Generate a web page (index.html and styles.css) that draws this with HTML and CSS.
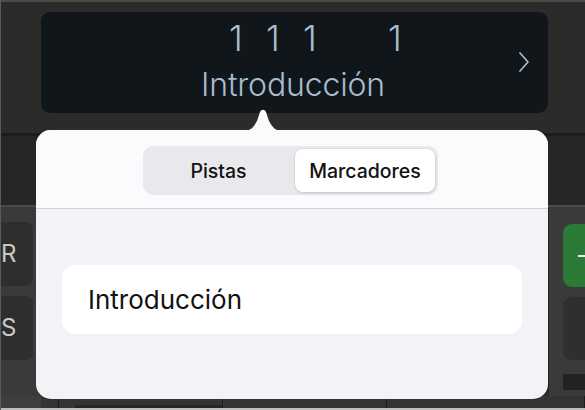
FILE: index.html
```html
<!DOCTYPE html>
<html lang="es">
<head>
<meta charset="utf-8">
<title>Marcadores</title>
<link rel="stylesheet" href="styles.css">
</head>
<body>
<div class="screen">
  <header class="topbar">
    <div class="display">
      <div class="position">
        <span class="num">1</span><span class="num">1</span><span class="num">1</span><span class="num beat">1</span>
      </div>
      <div class="marker-name">Introducción</div>
      <svg class="chevron" width="14" height="24" viewBox="0 0 14 24"><path d="M3 3 L11 12 L3 21" fill="none" stroke="currentColor" stroke-width="1.7" stroke-linecap="round" stroke-linejoin="round"/></svg>
    </div>
  </header>
  <div class="ruler"></div>
  <main class="tracks">
    <div class="left-col">
      <div class="key">R</div>
      <div class="key">S</div>
    </div>
    <div class="middle"></div>
    <div class="right-col">
      <div class="btn green"><span class="dash"></span></div>
      <div class="btn dark"></div>
      <div class="btn block"></div>
    </div>
  </main>
  <div class="timeline">
    <div class="cell c1"></div>
    <div class="cell c2"></div>
    <div class="cell c3"><span class="bar"></span></div>
    <div class="cell c4"></div>
    <div class="cell c5"></div>
  </div>

  <div class="popover">
    <svg class="arrow" width="44" height="22" viewBox="0 0 44 22"><path d="M0 22 C10 22 12 19 16 12 L19 3 C20.5 0 23.5 0 25 3 L28 12 C32 19 34 22 44 22 Z" fill="#fbfbfd"/></svg>
    <div class="pop-body">
      <div class="pop-head">
        <div class="segmented">
          <div class="seg">Pistas</div>
          <div class="seg selected">Marcadores</div>
        </div>
      </div>
      <div class="pop-list">
        <div class="row">Introducción</div>
      </div>
    </div>
  </div>
</div>
</body>
</html>
```

FILE: styles.css
```css
html, body {
  margin: 0;
  padding: 0;
}
body {
  width: 585px;
  height: 410px;
  overflow: hidden;
  background: #3a3a38;
  font-family: Inter, "Noto Sans", "Liberation Sans", sans-serif;
}
.screen {
  position: relative;
  width: 585px;
  height: 410px;
  display: flex;
  flex-direction: column;
  border-left: 1px solid #5a5a58;
  box-sizing: border-box;
}
.topbar {
  height: 133px;
  box-sizing: border-box;
  padding: 12px 0 0 40px;
  background: #2b2b2a;
  border-top: 2px solid #4a4a48;
}
.display {
  position: relative;
  width: 507px;
  height: 101px;
  margin-top: -2px;
  border-radius: 9px;
  background: #10161a;
  color: #a6bdd1;
  display: flex;
  flex-direction: column;
  align-items: center;
}
.position {
  display: flex;
  margin-top: 6px;
  margin-left: 42px;
  height: 40px;
  font-size: 35px;
  font-weight: 300;
  line-height: 40px;
}
.num { width: 37px; text-align: center; }
.beat { margin-left: 48px; }
.marker-name {
  margin-top: 7px;
  margin-right: 3px;
  font-size: 32px;
  font-weight: 300;
  line-height: 40px;
  letter-spacing: -0.15px;
}
.chevron {
  position: absolute;
  right: 17px;
  top: 38px;
}
.ruler {
  height: 74px;
  border-top: 3px solid #1c1c1a;
  background: #262624;
  box-sizing: border-box;
  border-bottom: 2px solid #4a4a48;
}
.tracks {
  flex: 1;
  display: flex;
}
.left-col {
  width: 40px;
  display: flex;
  flex-direction: column;
  gap: 10px;
  padding-top: 15px;
  overflow: hidden;
}
.key {
  margin-left: -30px;
  width: 62px;
  height: 64px;
  border-radius: 7px;
  background: #2e2e2c;
  color: #c9c9c7;
  font-size: 24px;
  line-height: 64px;
  padding-left: 30px;
  box-sizing: border-box;
}
.middle { flex: 1; background: #2c2c2a; }
.right-col {
  width: 37px;
  border-left: 1px solid #242422;
  display: flex;
  flex-direction: column;
  gap: 10px;
  padding: 17px 0 0 14px;
  box-sizing: border-box;
  overflow: hidden;
}
.btn {
  width: 40px;
  height: 63px;
  border-radius: 9px;
}
.green { background: #2b7a36; position: relative; }
.dash {
  position: absolute;
  left: 15px;
  top: 31px;
  width: 10px;
  height: 2px;
  background: #e8f0e8;
}
.dark { background: #2f2f2d; }
.block { height: 16px; border-radius: 0; background: #222220; margin-top: 4px; }
.timeline {
  height: 12px;
  display: flex;
  background: #343432;
  border-bottom: 2px solid #bdbdbd;
}
.cell { border-right: 1px solid #1c1c1a; height: 100%; position: relative; }
.c1 { width: 40px; background: #3e3e3c; border-right: none; }
.c2 { width: 17px; }
.c3 { width: 163px; }
.c4 { width: 163px; }
.c5 { flex: 1; }
.bar { position: absolute; left: 16px; right: 0; bottom: 0; height: 3px; background: #262624; }

.popover {
  position: absolute;
  left: 35px;
  top: 109px;
  width: 512px;
  display: flex;
  flex-direction: column;
}
.arrow {
  display: block;
  margin-left: 205px;
  margin-bottom: -1px;
}
.pop-body {
  height: 269px;
  border-radius: 15px;
  overflow: hidden;
  display: flex;
  flex-direction: column;
  background: #f2f2f7;
}
.pop-head {
  height: 79px;
  background: #fbfbfd;
  border-bottom: 1px solid #d3d3d7;
  display: flex;
  justify-content: center;
  padding-top: 16px;
  box-sizing: border-box;
}
.segmented {
  width: 295px;
  height: 49px;
  box-sizing: border-box;
  padding: 3px;
  border-radius: 10px;
  background: #e9e9ed;
  display: flex;
  margin-left: -3px;
}
.seg {
  flex: 1;
  display: flex;
  align-items: center;
  justify-content: center;
  font-size: 19.5px;
  font-weight: 500;
  color: #111;
  border-radius: 8px;
}
.seg:first-child { padding-right: 4px; }
.seg.selected {
  flex: 0 0 140px;
  padding-right: 0;
  background: #fff;
  box-shadow: 0 1px 3px rgba(0,0,0,0.15), 0 0 0 0.5px rgba(0,0,0,0.04);
}
.pop-list {
  padding: 56px 26px 0 26px;
}
.row {
  height: 69px;
  border-radius: 13px;
  background: #fff;
  display: flex;
  align-items: center;
  padding-left: 26px;
  font-size: 26px;
  color: #111;
}
```
